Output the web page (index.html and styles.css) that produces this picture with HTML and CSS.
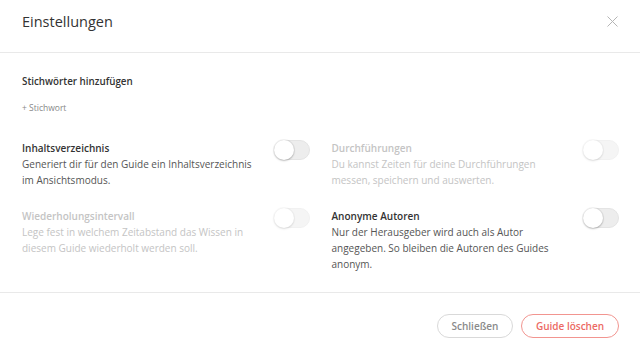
FILE: index.html
```html
<!DOCTYPE html>
<html lang="de">
<head>
<meta charset="utf-8">
<title>Einstellungen</title>
<link rel="stylesheet" href="styles.css">
</head>
<body>
<div class="modal">
  <header class="modal-header">
    <h1 class="modal-title">Einstellungen</h1>
    <button class="close" aria-label="Schließen">
      <svg width="11" height="11" viewBox="0 0 11 11"><path d="M0.5 0.5 L10.5 10.5 M10.5 0.5 L0.5 10.5" stroke="#b5b5b5" stroke-width="1" fill="none"/></svg>
    </button>
  </header>
  <main class="modal-body">
    <section class="tags">
      <h2 class="section-title">Stichwörter hinzufügen</h2>
      <a class="add-tag">+ Stichwort</a>
    </section>
    <div class="options">
      <div class="option">
        <div class="option-text">
          <div class="option-title">Inhaltsverzeichnis</div>
          <div class="option-desc">Generiert dir für den Guide ein Inhaltsverzeichnis im Ansichtsmodus.</div>
        </div>
        <span class="toggle"><span class="knob"></span></span>
      </div>
      <div class="option disabled">
        <div class="option-text">
          <div class="option-title">Durchführungen</div>
          <div class="option-desc">Du kannst Zeiten für deine Durchführungen messen, speichern und auswerten.</div>
        </div>
        <span class="toggle"><span class="knob"></span></span>
      </div>
      <div class="option disabled">
        <div class="option-text">
          <div class="option-title">Wiederholungsintervall</div>
          <div class="option-desc">Lege fest in welchem Zeitabstand das Wissen in diesem Guide wiederholt werden soll.</div>
        </div>
        <span class="toggle"><span class="knob"></span></span>
      </div>
      <div class="option">
        <div class="option-text">
          <div class="option-title">Anonyme Autoren</div>
          <div class="option-desc">Nur der Herausgeber wird auch als Autor angegeben. So bleiben die Autoren des Guides anonym.</div>
        </div>
        <span class="toggle"><span class="knob"></span></span>
      </div>
    </div>
  </main>
  <footer class="modal-footer">
    <button class="btn btn-default">Schließen</button>
    <button class="btn btn-danger">Guide löschen</button>
  </footer>
</div>
</body>
</html>
```
FILE: styles.css
```css
* { box-sizing: border-box; }
html, body { margin: 0; padding: 0; background: #fff; }
body {
  font-family: "Open Sans", "Noto Sans", sans-serif;
  color: #333;
  width: 640px;
  height: 351px;
  overflow: hidden;
}
.modal { display: flex; flex-direction: column; }
.modal-header {
  height: 53px;
  border-bottom: 1px solid #e9e9e9;
  display: flex;
  align-items: flex-start;
  justify-content: space-between;
  padding: 0 22px 0 22px;
}
.modal-title {
  margin: 0;
  padding-top: 10px;
  font-size: 14.5px;
  line-height: 24px;
  font-weight: 400;
  color: #333;
}
.close {
  margin-top: 16px;
  padding: 0;
  border: 0;
  background: none;
  width: 11px;
  height: 11px;
  display: block;
}
.close svg { display: block; }
.modal-body { padding: 21px 21px 20px 22px; }
.section-title {
  margin: 0;
  font-size: 9.8px;
  line-height: 16px;
  font-weight: 600;
  color: #333;
}
.add-tag {
  display: block;
  margin-top: 12px;
  font-size: 8.5px;
  line-height: 12px;
  color: #888;
}
.options {
  margin-top: 26px;
  display: grid;
  grid-template-columns: 1fr 1fr;
  column-gap: 22px;
  row-gap: 20px;
}
.option { display: flex; align-items: flex-start; gap: 12px; }
.option-text { flex: 1; }
.option-title {
  font-size: 10px;
  line-height: 16px;
  font-weight: 600;
  color: #333;
}
.option-desc {
  font-size: 10px;
  line-height: 16px;
  color: #555;
}
.option.disabled .option-title,
.option.disabled .option-desc { color: #c4c4c4; }
.toggle {
  flex: none;
  width: 36px;
  height: 20px;
  border-radius: 10px;
  background: #ededed;
  border: 1px solid #e4e4e4;
  position: relative;
  display: block;
}
.knob {
  position: absolute;
  left: -1px;
  top: -1px;
  width: 20px;
  height: 20px;
  border-radius: 50%;
  background: #fff;
  box-shadow: 0 1px 2px rgba(0,0,0,0.22), 0 0 0 1px rgba(0,0,0,0.05);
}
.option.disabled .toggle { opacity: 0.5; }
.modal-footer {
  border-top: 1px solid #e9e9e9;
  padding: 21px 21px 0 0;
  display: flex;
  justify-content: flex-end;
  gap: 8px;
}
.btn {
  height: 24px;
  border-radius: 12px;
  background: #fff;
  font-family: inherit;
  font-size: 10px;
  font-weight: 600;
  padding: 0;
  white-space: nowrap;
  cursor: pointer;
}
.btn-default { border: 1px solid #d9d9d9; color: #8a8a8a; width: 76px; }
.btn-danger { border: 1px solid #f29590; color: #ec6a64; width: 98px; }
```
